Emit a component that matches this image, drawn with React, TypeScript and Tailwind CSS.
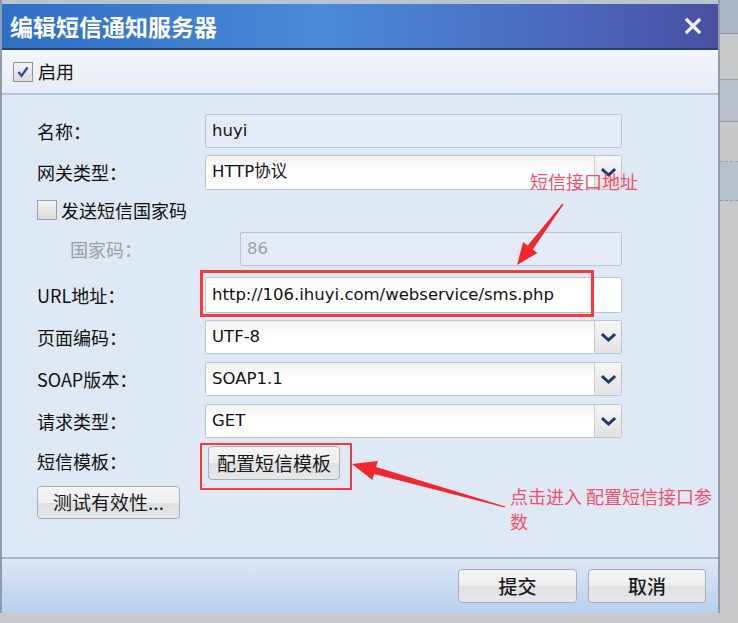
import React from 'react'

const cjk = "font-['Noto_Sans_CJK_SC',sans-serif]"
const latin = "font-['DejaVu_Sans','Noto_Sans_CJK_SC',sans-serif]"

type Pt = [number, number]

// tapered screenshot-style arrow, tail -> tip
function arrowPoints(tail: Pt, tip: Pt, head = 20, wing = 9, shaft = 3) {
  const dx = tip[0] - tail[0]
  const dy = tip[1] - tail[1]
  const len = Math.hypot(dx, dy)
  const ux = dx / len
  const uy = dy / len
  const nx = -uy
  const ny = ux
  const bx = tip[0] - ux * head
  const by = tip[1] - uy * head
  const p = (x: number, y: number) => `${x.toFixed(1)},${y.toFixed(1)}`
  return [
    p(tail[0] + nx * 0.6, tail[1] + ny * 0.6),
    p(bx + nx * shaft, by + ny * shaft),
    p(bx + nx * wing, by + ny * wing),
    p(tip[0], tip[1]),
    p(bx - nx * wing, by - ny * wing),
    p(bx - nx * shaft, by - ny * shaft),
    p(tail[0] - nx * 0.6, tail[1] - ny * 0.6),
  ].join(' ')
}

const Chevron = () => (
  <svg width="15" height="11" viewBox="0 0 15 11">
    <path d="M2 3 L7.5 8 L13 3" fill="none" stroke="#1d3a72" strokeWidth="3" strokeLinecap="square" />
  </svg>
)

const Label = ({ children, muted }: { children: React.ReactNode; muted?: boolean }) => (
  <span className={`${cjk} text-[18px] ${muted ? 'text-[#9aa0a8]' : 'text-[#111]'}`}>{children}</span>
)

const TextBox = ({ value, disabled, dark, className = '' }: { value: string; disabled?: boolean; dark?: boolean; className?: string }) => (
  <div
    className={`flex items-center h-full rounded-[2px] border border-[#bcc6d3] pl-[6px] ${latin} text-[16.5px] ${
      disabled ? 'bg-[#e4ebf6]' : 'bg-white'
    } ${disabled && !dark ? 'text-[#9ba1a8]' : 'text-[#111]'} ${className}`}
  >
    {value}
  </div>
)

const Select = ({ value }: { value: string }) => (
  <div className="flex h-full w-[417px] rounded-[2px] border border-[#bcc6d3] bg-white overflow-hidden">
    <div className={`flex-1 flex items-center pl-[6px] ${latin} text-[16.5px] text-[#111] bg-[linear-gradient(#f1f1f1,#ffffff_45%)]`}>
      {value}
    </div>
    <div className="w-[27px] flex items-center justify-center border-l border-[#c4ccd6] bg-[linear-gradient(#f6f6f6,#e2e2e2)]">
      <Chevron />
    </div>
  </div>
)

const Btn = ({ children, className = '' }: { children: React.ReactNode; className?: string }) => (
  <div
    className={`flex items-center justify-center rounded-[4px] border border-[#a6afbb] bg-[linear-gradient(#f5f5f5_0%,#eeeeee_50%,#dfe0e2_50%,#e6e7e9_100%)] ${cjk} text-[#1a1a1a] ${className}`}
  >
    {children}
  </div>
)

const Row = ({ top, h, children }: { top: number; h: number; children: React.ReactNode }) => (
  <div className="flex items-center" style={{ marginTop: top, height: h }}>
    {children}
  </div>
)

export default function App() {
  return (
    <div className="relative w-[738px] h-[623px] bg-[#c9cacc] overflow-hidden">
      <div className="flex h-full">
        {/* dialog */}
        <div className="w-[720px] h-[613px] flex flex-col border-l-2 border-r-2 border-[#8e9bb0] bg-[#dfe8f5]">
          <div className="h-[4px] bg-[#b9c4d1]" />
          {/* title bar */}
          <div className="h-[46px] flex items-center justify-between pl-[8px] pr-[16px] border-b-2 border-[#2b3f72] bg-[linear-gradient(90deg,#2f6fc4_0%,#4a8ad8_45%,#4b6cc0_75%,#4a4fa2_100%)]">
            <span className={`${cjk} text-white font-bold text-[23px]`}>编辑短信通知服务器</span>
            <svg width="18" height="18" viewBox="0 0 18 18">
              <path d="M3 3 L15 15 M15 3 L3 15" stroke="#f2f4fa" strokeWidth="3.2" strokeLinecap="square" />
            </svg>
          </div>
          {/* toolbar */}
          <div className="h-[45px] flex items-center pl-[11px] gap-[5px] border-b-2 border-[#b3c0d2] bg-[linear-gradient(#f3f6fb,#e6ecf5)]">
            <div className="w-[20px] h-[20px] border border-[#8f959d] bg-[linear-gradient(#f4f4f4,#dcdcdc)] flex items-center justify-center">
              <svg width="14" height="14" viewBox="0 0 14 14">
                <path d="M2.5 7 L5.5 11 L11.5 2.5" fill="none" stroke="#2a4aa8" strokeWidth="2.2" />
              </svg>
            </div>
            <Label>启用</Label>
          </div>
          {/* body */}
          <div className="flex-1 flex flex-col pl-[35px]">
            <Row top={19} h={34}>
              <span className="w-[168px]"><Label>名称：</Label></span>
              <TextBox value="huyi" className="w-[417px]" disabled dark />
            </Row>
            <Row top={7} h={35}>
              <span className="w-[168px]"><Label>网关类型：</Label></span>
              <Select value="HTTP协议" />
            </Row>
            <Row top={0} h={42}>
              <div className="flex items-center gap-[4px] -mt-[2px]">
                <div className="w-[20px] h-[20px] border border-[#9aa0a8] bg-[linear-gradient(#f4f4f4,#dadada)]" />
                <Label>发送短信国家码</Label>
              </div>
            </Row>
            <Row top={0} h={34}>
              <span className="w-[203px] pl-[33px]"><Label muted>国家码：</Label></span>
              <TextBox value="86" className="w-[382px]" disabled />
            </Row>
            <Row top={11} h={36}>
              <span className="w-[168px]"><Label>URL地址：</Label></span>
              <TextBox value="http://106.ihuyi.com/webservice/sms.php" className="w-[417px]" />
            </Row>
            <Row top={7} h={34}>
              <span className="w-[168px]"><Label>页面编码：</Label></span>
              <Select value="UTF-8" />
            </Row>
            <Row top={8} h={34}>
              <span className="w-[168px]"><Label>SOAP版本：</Label></span>
              <Select value="SOAP1.1" />
            </Row>
            <Row top={8} h={34}>
              <span className="w-[168px]"><Label>请求类型：</Label></span>
              <Select value="GET" />
            </Row>
            <Row top={8} h={34}>
              <span className="w-[171px] self-start pt-[2px]"><Label>短信模板：</Label></span>
              <Btn className="w-[132px] h-[34px] text-[19px]">配置短信模板</Btn>
            </Row>
            <Row top={6} h={33}>
              <Btn className="w-[143px] h-[33px] text-[19px]">测试有效性...</Btn>
            </Row>
          </div>
          {/* footer */}
          <div className="h-[56px] flex items-center justify-end gap-[11px] pr-[12px] border-t-2 border-[#a9b6c8] bg-[linear-gradient(#dde7f4,#b9d0ee)]">
            <Btn className="w-[119px] h-[34px] text-[19px] font-medium">提交</Btn>
            <Btn className="w-[118px] h-[34px] text-[19px] font-medium">取消</Btn>
          </div>
        </div>
        {/* window edge behind dialog */}
        <div className="flex-1 flex flex-col">
          <div className="h-[34px] bg-[#a9b5c3] border-b border-[#8d99a8]" />
          <div className="h-[46px] bg-[#c8c9cb] border-b border-[#9aa2ac]" />
          <div className="h-[42px] bg-[#b9bfc8] border-b border-[#8d99a8]" />
          <div className="h-[40px] bg-[#c7c8ca] border-b border-dashed border-[#8fa0c0]" />
          <div className="h-[39px] bg-[#b8c0ca] border-b border-dashed border-[#8fa0c0]" />
          <div className="flex-1 bg-[#c8c9cb]" />
        </div>
      </div>

      {/* annotations drawn over the screenshot */}
      <div className="absolute left-[200px] top-[270px] w-[394px] h-[47px] border-[3px] border-[#f53a3d] pointer-events-none" />
      <div className="absolute left-[200px] top-[443px] w-[152px] h-[47px] border-[2px] border-[#f53a3d] pointer-events-none" />
      <span className={`absolute left-[530px] top-[168px] text-[18px] text-[#f2506a] ${cjk}`}>
        短信接口地址
      </span>
      <div className={`absolute left-[510px] top-[484px] text-[18px] leading-[25px] text-[#f2506a] whitespace-nowrap ${cjk}`}>
        <div>点击进入 配置短信接口参</div>
        <div>数</div>
      </div>
      <svg className="absolute inset-0 pointer-events-none" width="738" height="623">
        <polygon points={arrowPoints([563, 204], [517, 265], 22, 9, 3.2)} fill="#f2262e" />
        <polygon points={arrowPoints([505, 507], [352, 464], 24, 10, 3.6)} fill="#f2262e" />
      </svg>
    </div>
  )
}
